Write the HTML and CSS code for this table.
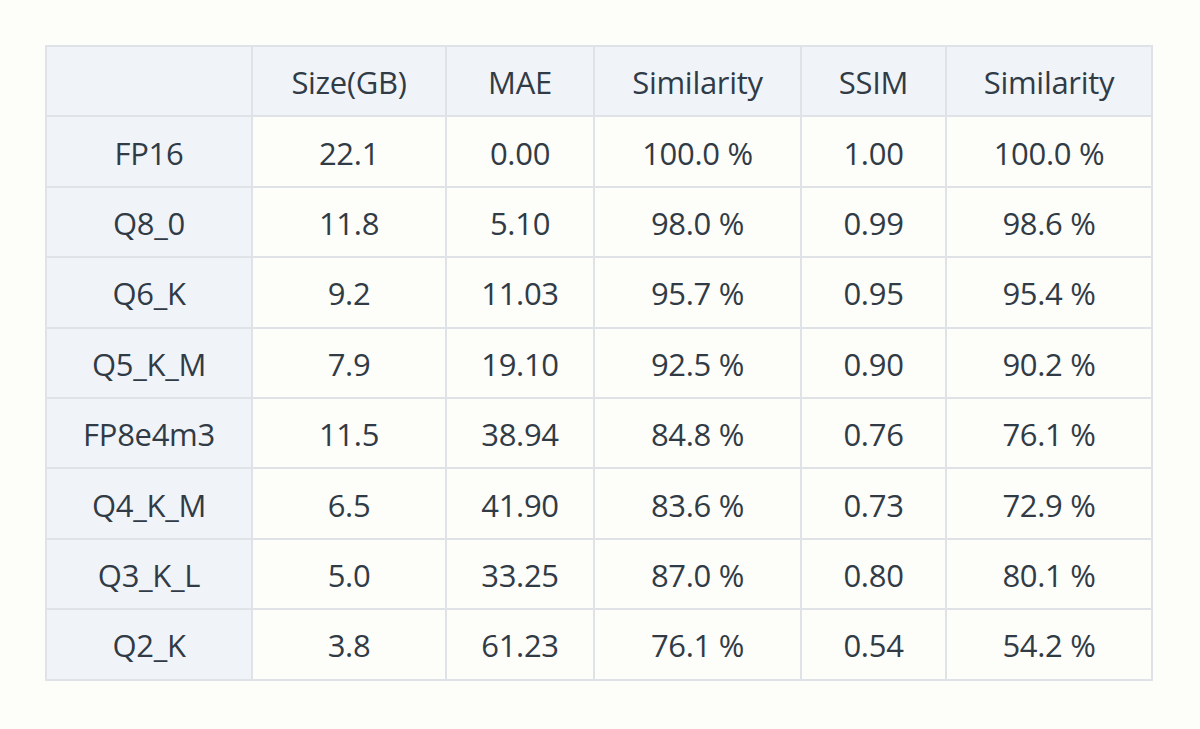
FILE: index.html
```html
<!DOCTYPE html>
<html>
<head>
<meta charset="utf-8">
<link rel="stylesheet" href="styles.css">
</head>
<body>
<table class="tbl">
  <colgroup>
    <col class="c1"><col class="c2"><col class="c3"><col class="c4"><col class="c5"><col class="c6">
  </colgroup>
  <thead>
    <tr><th></th><th>Size(GB)</th><th>MAE</th><th>Similarity</th><th>SSIM</th><th>Similarity</th></tr>
  </thead>
  <tbody>
    <tr><th>FP16</th><td>22.1</td><td>0.00</td><td>100.0 %</td><td>1.00</td><td>100.0 %</td></tr>
    <tr><th>Q8_0</th><td>11.8</td><td>5.10</td><td>98.0 %</td><td>0.99</td><td>98.6 %</td></tr>
    <tr><th>Q6_K</th><td>9.2</td><td>11.03</td><td>95.7 %</td><td>0.95</td><td>95.4 %</td></tr>
    <tr><th>Q5_K_M</th><td>7.9</td><td>19.10</td><td>92.5 %</td><td>0.90</td><td>90.2 %</td></tr>
    <tr><th>FP8e4m3</th><td>11.5</td><td>38.94</td><td>84.8 %</td><td>0.76</td><td>76.1 %</td></tr>
    <tr><th>Q4_K_M</th><td>6.5</td><td>41.90</td><td>83.6 %</td><td>0.73</td><td>72.9 %</td></tr>
    <tr><th>Q3_K_L</th><td>5.0</td><td>33.25</td><td>87.0 %</td><td>0.80</td><td>80.1 %</td></tr>
    <tr><th>Q2_K</th><td>3.8</td><td>61.23</td><td>76.1 %</td><td>0.54</td><td>54.2 %</td></tr>
  </tbody>
</table>
</body>
</html>
```
FILE: styles.css
```css
html, body {
  margin: 0;
  padding: 0;
  background: #fdfdf9;
}
body {
  padding: 45px 0 0 45px;
  font-family: "Open Sans", "Noto Sans", sans-serif;
  color: #313b46;
}
.tbl {
  border-collapse: collapse;
  table-layout: fixed;
  width: 1106px;
  font-size: 31px;
  letter-spacing: -0.3px;
}
.c1 { width: 206px; }
.c2 { width: 194px; }
.c3 { width: 148px; }
.c4 { width: 207px; }
.c5 { width: 145px; }
.c6 { width: 206px; }
.tbl th, .tbl td {
  border: 2px solid #dfe2e7;
  height: 70.4px;
  padding: 3px 0 0 0;
  line-height: 1;
  text-align: center;
  vertical-align: middle;
  font-weight: 400;
  box-sizing: border-box;
}
.tbl tr { height: 70.4px; }
.tbl thead th,
.tbl tbody th {
  background: #f0f4f9;
}
.tbl td {
  background: #fdfdf9;
}
```
